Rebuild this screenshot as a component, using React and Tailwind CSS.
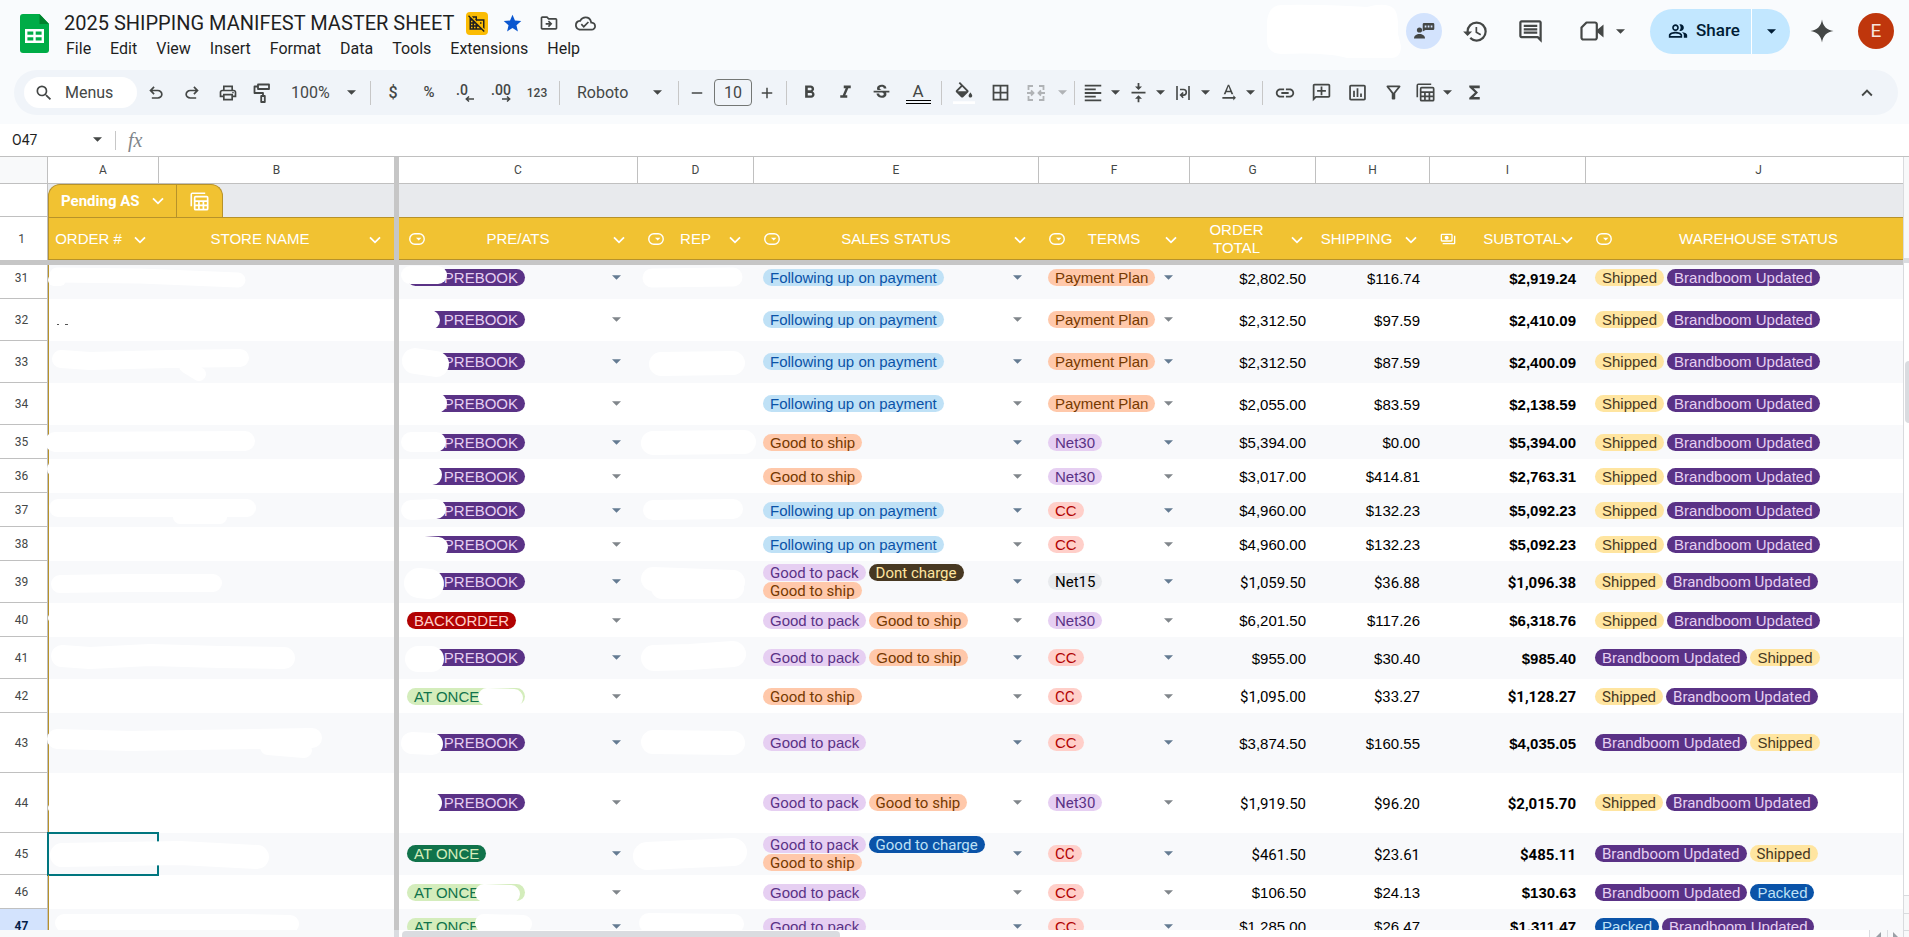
import React from "react";
import {
  MdDomainDisabled, MdStar, MdOutlineDriveFileMove, MdOutlineCloudDone, MdSearch, MdOutlinePrint,
  MdFormatBold, MdFormatItalic, MdStrikethroughS, MdBorderAll, MdFormatAlignLeft,
  MdVerticalAlignCenter, MdTextRotationNone, MdLink, MdOutlineAddComment, MdInsertChartOutlined,
  MdOutlineFilterAlt, MdFunctions, MdKeyboardArrowUp, MdHistory, MdOutlineComment,
  MdOutlinePeopleAlt, MdOutlinePayments, MdAdd, MdRemove,
} from "react-icons/md";

const GRID_FONT = "font-['Liberation_Sans',Arial,sans-serif]";
const UI_FONT = "font-[Roboto,'Liberation_Sans',sans-serif]";

const CHIPS = {
  PREBOOK: "bg-[#5a3286] text-[#e6cff2] min-w-[118px] text-right",
  BACKORDER: "bg-[#b10202] text-[#ffcfc9]",
  "AT ONCE": "bg-[#11734b] text-[#d4edbc]",
  "AT ONCE*": "bg-[#d4edbc] text-[#11734b] min-w-[118px]",
  "Following up on payment": "bg-[#bfe1f6] text-[#0a53a8]",
  "Good to ship": "bg-[#ffc8aa] text-[#753800]",
  "Good to pack": "bg-[#e6cff2] text-[#5a3286]",
  "Dont charge": "bg-[#473822] text-[#ffe5a0]",
  "Good to charge": "bg-[#0a53a8] text-[#bfe1f6]",
  "Payment Plan": "bg-[#ffc8aa] text-[#753800]",
  Net30: "bg-[#e6cff2] text-[#5a3286]",
  Net15: "bg-[#e8eaed] text-black",
  CC: "bg-[#ffcfc9] text-[#b10202]",
  Shipped: "bg-[#ffe5a0] text-[#473822]",
  "Brandboom Updated": "bg-[#5a3286] text-[#e6cff2]",
  Packed: "bg-[#0a53a8] text-[#bfe1f6]",
};

const FU = ["Following up on payment"];
const GP = ["Good to pack"];
const GS = ["Good to ship"];
const PS = ["Good to pack", "Good to ship"];
const SB = ["Shipped", "Brandboom Updated"];
const BS = ["Brandboom Updated", "Shipped"];
const H34 = { row: "h-[34px]", chip: "pb-0", num: "pt-0.5" };
const H42 = { row: "h-[42px]", chip: "pb-px", num: "pt-px" };
const H60 = { row: "h-[60px]", chip: "pb-px", num: "pt-px" };

const ROWS = [
  { n: 31, h: H42, pre: "PREBOOK", sales: FU, terms: "Payment Plan", total: "$2,802.50", ship: "$116.74", sub: "$2,919.24", wh: SB },
  { n: 32, h: H42, pre: "PREBOOK", sales: FU, terms: "Payment Plan", total: "$2,312.50", ship: "$97.59", sub: "$2,410.09", wh: SB },
  { n: 33, h: H42, pre: "PREBOOK", sales: FU, terms: "Payment Plan", total: "$2,312.50", ship: "$87.59", sub: "$2,400.09", wh: SB },
  { n: 34, h: H42, pre: "PREBOOK", sales: FU, terms: "Payment Plan", total: "$2,055.00", ship: "$83.59", sub: "$2,138.59", wh: SB },
  { n: 35, h: H34, pre: "PREBOOK", sales: GS, terms: "Net30", total: "$5,394.00", ship: "$0.00", sub: "$5,394.00", wh: SB },
  { n: 36, h: H34, pre: "PREBOOK", sales: GS, terms: "Net30", total: "$3,017.00", ship: "$414.81", sub: "$2,763.31", wh: SB },
  { n: 37, h: H34, pre: "PREBOOK", sales: FU, terms: "CC", total: "$4,960.00", ship: "$132.23", sub: "$5,092.23", wh: SB },
  { n: 38, h: H34, pre: "PREBOOK", sales: FU, terms: "CC", total: "$4,960.00", ship: "$132.23", sub: "$5,092.23", wh: SB },
  { n: 39, h: H42, roboto: true, pre: "PREBOOK", sales: ["Good to pack", "Dont charge", "Good to ship"], terms: "Net15", total: "$1,059.50", ship: "$36.88", sub: "$1,096.38", wh: SB },
  { n: 40, h: H34, pre: "BACKORDER", sales: PS, terms: "Net30", total: "$6,201.50", ship: "$117.26", sub: "$6,318.76", wh: SB },
  { n: 41, h: H42, pre: "PREBOOK", sales: PS, terms: "CC", total: "$955.00", ship: "$30.40", sub: "$985.40", wh: BS },
  { n: 42, h: H34, roboto: true, pre: "AT ONCE*", sales: GS, terms: "CC", total: "$1,095.00", ship: "$33.27", sub: "$1,128.27", wh: SB },
  { n: 43, h: H60, pre: "PREBOOK", sales: GP, terms: "CC", total: "$3,874.50", ship: "$160.55", sub: "$4,035.05", wh: BS },
  { n: 44, h: H60, roboto: true, pre: "PREBOOK", sales: PS, terms: "Net30", total: "$1,919.50", ship: "$96.20", sub: "$2,015.70", wh: SB },
  { n: 45, h: H42, roboto: true, selected: true, pre: "AT ONCE", sales: ["Good to pack", "Good to charge", "Good to ship"], terms: "CC", total: "$461.50", ship: "$23.61", sub: "$485.11", wh: BS },
  { n: 46, h: H34, pre: "AT ONCE*", sales: GP, terms: "CC", total: "$106.50", ship: "$24.13", sub: "$130.63", wh: ["Brandboom Updated", "Packed"] },
  { n: 47, h: H34, active: true, pre: "AT ONCE*", sales: GP, terms: "CC", total: "$1,285.00", ship: "$26.47", sub: "$1,311.47", wh: ["Packed", "Brandboom Updated"] },
];

/* Marker strokes that hide private cells: [pen width, path] */
const STROKES = [
  [15, "M57 275L140 276L238 280"], [12, "M54 280L60 280"], [18, "M61 359L90 361L170 359L240 358"], [14, "M186 366L199 374"],
  [20, "M55 442L245 441"], [16, "M55 469L60 469"], [18, "M58 508L247 508"], [14, "M180 517L220 517"],
  [18, "M60 584L130 583L213 583"], [8, "M52 618L56 618"], [22, "M62 656L90 658L150 655L220 657L284 658"],
  [20, "M57 739L130 741L312 738"], [16, "M268 747L304 750"], [8, "M52 808L56 808"], [24, "M62 855L180 853L257 857"],
  [18, "M64 923L240 923L290 924"],
  [18, "M410 275L438 275"], [20, "M410 320L430 320"], [26, "M415 361L436 364"], [20, "M410 404L437 403"],
  [20, "M411 442L436 442"], [20, "M410 476L432 475"], [20, "M411 510L436 509"], [20, "M410 545L438 547"],
  [30, "M419 583L429 584"], [26, "M418 659L431 659"], [22, "M412 743L432 744"], [22, "M412 803L431 803"],
  [18, "M487 697L514 698"], [18, "M484 893L511 894"], [18, "M484 923L523 924"],
  [19, "M652 278L733 277"], [24, "M661 364L733 363"], [24, "M653 443L744 442"], [20, "M653 510L733 509"],
  [24, "M653 579L733 582"], [22, "M662 588L733 588"], [26, "M654 658L690 657L733 654"], [24, "M653 742L733 743"],
  [28, "M647 856L733 852"], [20, "M649 923L734 924"],
];

function Sym({ d, className }) {
  return <svg viewBox="0 -960 960 960" fill="currentColor" aria-hidden="true" className={className}><path d={d} /></svg>;
}
const UNDO = "M280-200v-80h284q63 0 109.5-40T720-420q0-60-46.5-100T564-560H312l104 104-56 56-200-200 200-200 56 56-104 104h252q97 0 167 63t70 157q0 94-70 157t-167 63H280Z";
const REDO = "M396-200q-97 0-167-63t-70-157q0-94 70-157t167-63h252L544-744l56-56 200 200-200 200-56-56 104-104H396q-63 0-109.5 40T240-420q0 60 46.5 100T396-280h284v80H396Z";

const Caret = ({ className = "" }) => (
  <svg viewBox="0 0 10 5" className={`h-[5px] w-[9px] shrink-0 ${className}`} fill="currentColor" aria-hidden="true"><path d="M0 0h10L5 5z" /></svg>
);
const Chevron = () => (
  <svg viewBox="0 0 12 8" className="h-2 w-3" fill="none" stroke="currentColor" strokeWidth="1.8" aria-hidden="true"><path d="M1 1.3l5 5 5-5" /></svg>
);
const ChipIcon = () => (
  <svg viewBox="0 0 16 12" className="h-3 w-4" aria-hidden="true">
    <rect x="0.8" y="0.8" width="14.4" height="10.4" rx="5" fill="none" stroke="#fff" strokeWidth="1.4" />
    <path d="M7 4.8h5.400L9.700 7.600z" fill="#fff" />
  </svg>
);
const TableStack = ({ className }) => (
  <svg viewBox="0 0 20 20" className={className} fill="currentColor" aria-hidden="true">
    <path d="M0.500 15V2.500a2 2 0 0 1 2-2H16v1.700H2.200V15z" />
    <path fillRule="evenodd" d="M6 4h11.500a2 2 0 0 1 2 2v11.500a2 2 0 0 1-2 2H6a2 2 0 0 1-2-2V6a2 2 0 0 1 2-2zM5.800 5.800v3h11.900v-3zM5.800 10.600v2.600h2.700v-2.600zM10.300 10.600v2.600h2.900v-2.600zM15 10.600v2.600h2.700v-2.600zM5.800 15v2.700h2.700V15zM10.300 15v2.700h2.900V15zM15 15v2.700h2.700V15z" />
  </svg>
);

function Tool({ label, children, className = "w-9" }) {
  return (
    <button type="button" aria-label={label} className={`flex h-8 shrink-0 items-center justify-center ${className}`}>{children}</button>
  );
}
const Sep = () => <span className="mx-1 h-6 w-px shrink-0 bg-[#c7c7c7]" />;
function Pair({ label, children, className = "mr-px" }) {
  return (
    <div className={`flex shrink-0 items-center ${className}`}>
      <Tool label={label} className="w-7">{children}</Tool>
      <Tool label={`${label} options`} className="w-4"><Caret /></Tool>
    </div>
  );
}

function Logo() {
  return (
    <svg viewBox="0 0 29 39" className="h-[39px] w-[29px]" aria-label="Sheets" role="img">
      <path d="M3 0h16.500l9.500 10v26a3 3 0 0 1-3 3H3a3 3 0 0 1-3-3V3a3 3 0 0 1 3-3z" fill="#00ac47" />
      <path d="M19.500 0L29 10h-9.500z" fill="#00832d" />
      <path d="M5 15h19v14H5zM7.400 17.400v3.400h5.900v-3.400zM15.700 17.400v3.400h5.900v-3.400zM7.400 23.200v3.400h5.900v-3.400zM15.700 23.200v3.400h5.900v-3.400z" fill="#fff" fillRule="evenodd" />
    </svg>
  );
}

function Header() {
  return (
    <header className="flex h-[70px] shrink-0 justify-between pl-5 pr-[15px]">
      <div className="flex">
        <a href="#home" className="mt-3.5 block w-[29px]"><Logo /></a>
        <div className="ml-3.5 flex flex-col">
          <div className="mt-[11px] flex h-6 items-center text-[#444746]">
            <input aria-label="Document title" defaultValue="2025 SHIPPING MANIFEST MASTER SHEET" className="ml-px w-[402px] bg-transparent text-[20px] leading-6 text-[#1f1f1f] outline-none" />
            <span className="flex h-[23px] w-[22px] items-center justify-center rounded bg-[#fbbc04]"><MdDomainDisabled className="size-[18px] text-[#1f1f1f]" /></span>
            <button type="button" aria-label="Star" className="ml-3.5"><MdStar className="size-[21px] text-[#0b57d0]" /></button>
            <button type="button" aria-label="Move" className="ml-4"><MdOutlineDriveFileMove className="size-5" /></button>
            <button type="button" aria-label="Saved to Drive" className="ml-4"><MdOutlineCloudDone className="size-[21px]" /></button>
          </div>
          <nav className="flex gap-[19px] pl-[3px] pt-1 text-[16px] leading-5 text-[#1f1f1f]">
            {["File", "Edit", "View", "Insert", "Format", "Data", "Tools", "Extensions", "Help"].map((m) => (
              <button key={m} type="button">{m}</button>
            ))}
          </nav>
        </div>
      </div>
      <div className="flex h-[62px] items-center text-[#444746]">
        <svg viewBox="0 0 134 54" className="h-[54px] w-[134px]" fill="#fff" aria-hidden="true">
          <path d="M14 1Q50 0 100 3Q118 -2 126 4Q132 8 131 30L134 42Q134 54 124 54H80Q60 48 14 50Q0 49 0 36V18Q1 2 14 1Z" />
        </svg>
        <span className="ml-[5px] flex size-9 items-center justify-center rounded-full bg-[#d3e3fd]">
          <svg viewBox="0 0 24 24" className="size-6" fill="currentColor" aria-hidden="true">
            <circle cx="7.500" cy="11" r="2.600" /><path d="M2 19.500c0-3 2.500-4.500 5.500-4.500s5.500 1.500 5.500 4.500z" />
            <path d="M12 4h9a1.300 1.300 0 0 1 1.300 1.300v4.400A1.300 1.300 0 0 1 21 11h-7.500L10.700 12.500V5.300A1.300 1.300 0 0 1 12 4zm.7 2.500v2h1.700v-2zm3 0v2h1.700v-2zm3 0v2h1.700v-2z" fillRule="evenodd" />
          </svg>
        </span>
        <button type="button" aria-label="Version history" className="ml-5"><MdHistory className="size-[27px]" /></button>
        <button type="button" aria-label="Comments" className="ml-7"><MdOutlineComment className="size-[27px]" /></button>
        <button type="button" aria-label="Join a call" className="ml-9 flex items-center">
          <svg viewBox="0 0 24 20" className="h-5 w-6" aria-hidden="true">
            <path d="M6.500 1.500H15a1.800 1.800 0 0 1 1.800 1.800v13.400A1.800 1.800 0 0 1 15 18.500H3.300a1.800 1.800 0 0 1-1.800-1.800V6.500z" fill="none" stroke="currentColor" strokeWidth="2.200" strokeLinejoin="round" />
            <path d="M17 9l6.500-5.500v13L17 11z" fill="currentColor" />
          </svg>
          <Caret className="ml-3" />
        </button>
        <div className="ml-[25px] flex h-[45px] items-center rounded-full bg-[#c2e7ff] text-[#001d35]">
          <button type="button" className="flex h-full w-[102px] items-center gap-2 border-r border-white pl-[18px] text-[17px] font-medium"><MdOutlinePeopleAlt className="size-5 shrink-0" />Share</button>
          <button type="button" aria-label="Share options" className="flex h-full w-[38px] items-center justify-center"><Caret /></button>
        </div>
        <button type="button" aria-label="Ask Gemini" className="ml-5">
          <svg viewBox="0 0 24 24" className="size-6" fill="currentColor" aria-hidden="true"><path d="M12 0.500C12.800 7 17 11.200 23.500 12C17 12.800 12.800 17 12 23.500C11.200 17 7 12.800 0.500 12C7 11.200 11.200 7 12 0.500z" /></svg>
        </button>
        <button type="button" aria-label="Account" className="ml-6 flex size-9 items-center justify-center rounded-full bg-[#bf360c] text-[19px] text-[#f6e4dd]">E</button>
      </div>
    </header>
  );
}

function Toolbar() {
  return (
    <div role="toolbar" aria-label="Main toolbar" className="ml-3.5 mr-[11px] flex h-[45px] shrink-0 items-center rounded-full bg-[#f0f4f9] pl-2.5 text-[15px] text-[#444746]">
      <label className="mr-px flex h-[31px] w-[113px] shrink-0 items-center rounded-full bg-white pl-2.5">
        <MdSearch className="size-5 shrink-0" />
        <input aria-label="Menus" placeholder="Menus" className="ml-[11px] w-[60px] bg-transparent text-[16px] outline-none placeholder:text-[#444746]" />
      </label>
      <Tool label="Undo"><Sym d={UNDO} className="size-5" /></Tool>
      <Tool label="Redo"><Sym d={REDO} className="size-5" /></Tool>
      <Tool label="Print"><MdOutlinePrint className="size-5" /></Tool>
      <Tool label="Paint format" className="w-8">
        <svg viewBox="0 0 18 20" className="h-5 w-[18px]" fill="none" stroke="currentColor" strokeWidth="1.800" aria-hidden="true">
          <path d="M5 1.500h11v4.500H5zM5 3.500H1.500v6.500H10v3M8.200 13h3.600v6H8.200z" strokeLinejoin="round" />
        </svg>
      </Tool>
      <label className="relative flex w-[88px] shrink-0 items-center">
        <select aria-label="Zoom" className="w-full appearance-none bg-transparent pl-[13px] text-[16px] outline-none"><option>100%</option></select>
        <Caret className="pointer-events-none absolute right-2.5" />
      </label>
      <Sep />
      <Tool label="Currency"><span className="text-[16px] font-medium">$</span></Tool>
      <Tool label="Percent"><span className="text-[15px] font-medium">%</span></Tool>
      <Tool label="Decrease decimals">
        <span className="flex flex-col items-end leading-none"><span className="pr-1.5 text-[14px] font-medium leading-3">.0</span>
          <svg viewBox="0 0 9 6" className="h-1.5 w-[9px]" fill="none" stroke="currentColor" strokeWidth="1.500" aria-hidden="true"><path d="M9 3H1.500M4 .5L1.300 3 4 5.500" /></svg></span>
      </Tool>
      <Tool label="Increase decimals">
        <span className="flex flex-col items-end leading-none"><span className="text-[14px] font-medium leading-3">.00</span>
          <svg viewBox="0 0 9 6" className="h-1.5 w-[9px]" fill="none" stroke="currentColor" strokeWidth="1.500" aria-hidden="true"><path d="M0 3h7.500M5 .5L7.700 3 5 5.500" /></svg></span>
      </Tool>
      <Tool label="More formats"><span className="text-[12px] font-medium">123</span></Tool>
      <Sep />
      <label className="relative flex w-[110px] shrink-0 items-center">
        <select aria-label="Font" className="w-full appearance-none bg-transparent pl-[13px] text-[16px] outline-none"><option>Roboto</option></select>
        <Caret className="pointer-events-none absolute right-3" />
      </label>
      <Sep />
      <Tool label="Decrease font size" className="w-7"><MdRemove className="size-[18px]" /></Tool>
      <input aria-label="Font size" defaultValue="10" className="ml-[3px] h-[27px] w-[38px] shrink-0 rounded border border-[#747775] bg-transparent text-center text-[16px] outline-none" />
      <Tool label="Increase font size" className="w-[30px]"><MdAdd className="size-[18px]" /></Tool>
      <Sep />
      <Tool label="Bold"><MdFormatBold className="size-[21px]" /></Tool>
      <Tool label="Italic"><MdFormatItalic className="size-[21px]" /></Tool>
      <Tool label="Strikethrough"><MdStrikethroughS className="size-[21px]" /></Tool>
      <Tool label="Text color" className="w-[38px]">
        <span className="flex w-[25px] flex-col items-center pt-px"><span className="text-[17px] leading-4">A</span><span className="mt-px h-1 w-full border-y border-black" /></span>
      </Tool>
      <Sep />
      <Tool label="Fill color">
        <svg viewBox="0 0 24 24" className="size-[22px]" aria-hidden="true">
          <path fill="currentColor" d="M16.560 8.940L7.620 0 6.210 1.410l2.380 2.380-5.150 5.150c-.59.59-.59 1.540 0 2.120l5.500 5.500c.29.29.68.44 1.060.44s.77-.15 1.060-.44l5.500-5.500c.59-.58.59-1.530 0-2.120zM5.210 10L10 5.210 14.790 10H5.210zM19 11.500s-2 2.170-2 3.500c0 1.100.9 2 2 2s2-.9 2-2c0-1.330-2-3.500-2-3.500z" />
          <path fill="#fff" d="M0 21h24v3H0z" />
        </svg>
      </Tool>
      <Tool label="Borders"><MdBorderAll className="size-[21px]" /></Tool>
      <div className="flex shrink-0 text-[#b0b3b6]">
        <Tool label="Merge cells">
          <svg viewBox="0 0 18 16" className="h-4 w-[18px]" fill="none" stroke="currentColor" strokeWidth="1.800" aria-hidden="true">
            <path d="M6 1H1.500v4M12 1h4.500v4M6 15H1.500v-4M12 15h4.500v-4M0 8h6M4 5.500L6.500 8 4 10.500M18 8h-6M14 5.500L11.500 8l2.500 2.500" />
          </svg>
        </Tool>
        <Tool label="Merge options" className="w-4"><Caret /></Tool>
      </div>
      <Sep />
      <Pair label="Horizontal align"><MdFormatAlignLeft className="size-[22px]" /></Pair>
      <Pair label="Vertical align"><MdVerticalAlignCenter className="size-[21px]" /></Pair>
      <Pair label="Text wrapping">
        <svg viewBox="0 0 14 16" className="h-4 w-3.5" fill="none" stroke="currentColor" strokeWidth="1.600" aria-hidden="true">
          <path d="M1 1v14M13 1v14M4 4.500h3.500a2.800 2.800 0 0 1 0 5.600H5M7.200 7.500L4.600 10.100l2.600 2.600" />
        </svg>
      </Pair>
      <Pair label="Text rotation" className=""><MdTextRotationNone className="size-[21px]" /></Pair>
      <Sep />
      <Tool label="Insert link"><MdLink className="size-[22px]" /></Tool>
      <Tool label="Insert comment"><MdOutlineAddComment className="size-[21px] -scale-x-100" /></Tool>
      <Tool label="Insert chart"><MdInsertChartOutlined className="size-[21px]" /></Tool>
      <Tool label="Create a filter"><MdOutlineFilterAlt className="size-[21px]" /></Tool>
      <Pair label="Table views"><TableStack className="size-[19px]" /></Pair>
      <Tool label="Functions"><MdFunctions className="size-[21px]" /></Tool>
      <button type="button" aria-label="Hide menus" className="ml-auto mr-5"><MdKeyboardArrowUp className="size-[22px]" /></button>
    </div>
  );
}

const Cols = () => (
  <colgroup>
    <col className="w-12" /><col className="w-[111px]" /><col className="w-[235px]" /><col className="w-[5px]" />
    <col className="w-[239px]" /><col className="w-[116px]" /><col className="w-[285px]" /><col className="w-[151px]" />
    <col className="w-[126px]" /><col className="w-[114px]" /><col className="w-[156px]" /><col />
  </colgroup>
);

function Head({ children, icon, arrow = true, end = false, first = false }) {
  return (
    <th scope="col" className={`border-y border-[#b7922a] bg-[#f1c232] p-0 font-normal text-white ${first ? "border-l" : ""}`}>
      <div className={`flex items-center ${end ? "relative" : ""}`}>
        {icon && <span className={end ? "absolute left-2.5" : "w-7 pl-2.5"}>{icon}</span>}
        <span className={`flex-1 text-[15px] leading-[18px] ${end ? "text-right" : "text-center"} ${icon && !end && arrow ? "pl-1" : ""}`}>{children}</span>
        {arrow && (
          <button type="button" aria-label="Column menu" className={`flex pt-0.5 ${end ? "w-[25px]" : first ? "w-[31px] pl-1.5" : "w-[33px] pl-2"}`}><Chevron /></button>
        )}
      </div>
    </th>
  );
}

function Chips({ items, odd, pad = "pl-[9px]", arrow = true }) {
  return (
    <div className={`flex items-center ${pad}`}>
      <div className="flex flex-1 flex-wrap gap-x-[3px] gap-y-px">
        {items.map((c) => (
          <span key={c} className={`h-[17px] whitespace-nowrap rounded-full px-[7px] text-[15px] leading-[18px] ${CHIPS[c]}`}>{c.replace("*", "")}</span>
        ))}
      </div>
      {arrow && (
        <button type="button" aria-label="Choose value" className={`w-[26px] ${odd ? "text-[#647b92]" : "text-[#80868b]"}`}><Caret /></button>
      )}
    </div>
  );
}

function Sheet() {
  const dropdown = <ChipIcon />;
  return (
    <div className="flex min-h-0 flex-1 flex-col overflow-hidden bg-white">
      <table className={`w-full shrink-0 table-fixed border-separate border-spacing-0 ${GRID_FONT}`}>
        <Cols />
        <thead>
          <tr className={`h-[27px] text-[12px] text-[#444746] ${UI_FONT}`}>
            <td className="border-b border-r border-[#c0c0c0] bg-[#f8f9fa] p-0" />
            {["A", "B", "", "C", "D", "E", "F", "G", "H", "I", "J"].map((c, i) =>
              c ? (
                <th key={i} scope="col" className={`border-b border-[#c0c0c0] p-0 font-normal ${c === "B" ? "" : c === "J" ? "pl-7" : "border-r"}`}>{c}</th>
              ) : (
                <td key={i} className="bg-[#c6c6c6] p-0" />
              ),
            )}
          </tr>
          <tr className="h-[33px]">
            <td className="border-b border-r border-[#c0c0c0] p-0" />
            <td colSpan={2} className="bg-[#e8eaed] p-0">
              <div className={`flex h-[33px] w-[175px] rounded-t-[12px] border border-b-0 border-[#b7922a] bg-[#f1c232] text-white ${UI_FONT}`}>
                <button type="button" className="flex w-[128px] items-center justify-between border-r border-[#b7922a] pl-3 pr-3 text-[15px] font-bold">Pending AS<Chevron /></button>
                <button type="button" aria-label="Table views" className="flex flex-1 items-center justify-center"><TableStack className="size-[19px]" /></button>
              </div>
            </td>
            <td className="bg-[#c6c6c6] p-0" />
            <td colSpan={8} className="bg-[#e8eaed] p-0" />
          </tr>
          <tr className="h-[43px]">
            <th scope="row" className={`border-r border-[#c0c0c0] p-0 pr-1 text-[12px] font-normal text-[#444746] ${UI_FONT}`}>1</th>
            <Head first>ORDER #</Head>
            <Head>STORE NAME</Head>
            <td className="bg-[#c6c6c6] p-0" />
            <Head icon={dropdown}>PRE/ATS</Head>
            <Head icon={dropdown}>REP</Head>
            <Head icon={dropdown}>SALES STATUS</Head>
            <Head icon={dropdown}>TERMS</Head>
            <Head>ORDER<br />TOTAL</Head>
            <Head>SHIPPING</Head>
            <Head icon={<MdOutlinePayments className="size-4" />} end>SUBTOTAL</Head>
            <Head icon={dropdown} arrow={false}>WAREHOUSE STATUS</Head>
          </tr>
        </thead>
      </table>
      <div className="h-[5px] shrink-0 bg-[#c6c6c6]" />
      <div className="relative min-h-0 flex-1 overflow-hidden">
        <table className={`-mt-2 w-full table-fixed border-separate border-spacing-0 text-[15px] leading-[18px] text-black ${GRID_FONT}`}>
          <Cols />
          <tbody>
            {ROWS.map((r) => {
              const odd = r.n % 2 === 1;
              const font = r.roboto ? UI_FONT : "";
              const chip = `px-0 pt-0 ${r.h.chip} ${font}`;
              const num = `pb-0 pl-0 pr-2.5 text-right ${r.h.num} ${font}`;
              return (
                <tr key={r.n} className={`${r.h.row} ${odd ? "bg-[#f8f9fb]" : "bg-white"}`}>
                  <th scope="row" className={`border-b border-r border-[#c0c0c0] p-0 pr-1 text-[12px] ${UI_FONT} ${r.active ? "bg-[#d3e3fd] font-bold text-[#041e49]" : "bg-white font-normal text-[#444746]"}`}>{r.n}</th>
                  <td className="relative border-l border-[#b7922a] p-0">
                    {r.selected && <span className="absolute -inset-y-px -left-0.5 right-0 border-2 border-[#00767f]" />}
                  </td>
                  <td className="p-0" />
                  <td className="bg-[#c6c6c6] p-0" />
                  <td className={`px-0 pt-0 ${r.h.chip}`}><Chips items={[r.pre]} odd={odd} pad="pl-2" /></td>
                  <td className="p-0" />
                  <td className={chip}><Chips items={r.sales} odd={odd} /></td>
                  <td className={chip}><Chips items={[r.terms]} odd={odd} /></td>
                  <td className={num}>{r.total}</td>
                  <td className={num}>{r.ship}</td>
                  <td className={`font-bold ${num}`}>{r.sub}</td>
                  <td className={chip}><Chips items={r.wh} odd={odd} arrow={false} /></td>
                </tr>
              );
            })}
          </tbody>
        </table>
        <svg className="pointer-events-none absolute left-0 top-0 h-[672px] w-[760px]" viewBox="0 265 760 672" fill="none" stroke="#fff" strokeLinecap="round" strokeLinejoin="round" aria-hidden="true">
          {STROKES.map(([w, d]) => <path key={d} d={d} strokeWidth={w} />)}
          <path d="M57 324.500h2M65 324.500h3" stroke="#555" strokeWidth="1" strokeLinecap="butt" />
        </svg>
      </div>
      <div className="flex h-[7px] shrink-0 bg-white">
        <div className="w-[394px] bg-[#f8f9fa]" />
        <div className="w-[5px] bg-[#dadce0]" />
        <div className="ml-[3px] mt-px w-[438px] rounded-t bg-[#dadce0]" />
        <div className="ml-auto flex text-[#9aa0a6]">
          <span className="flex w-[18px] items-end justify-center border-l border-[#dadce0] bg-[#f8f9fa]"><svg viewBox="0 0 5 5" className="h-[5px] w-[5px]" fill="currentColor" aria-hidden="true"><path d="M5 0v5H0z" /></svg></span>
          <span className="flex w-4 items-end justify-center border-l border-[#dadce0] bg-[#f8f9fa]"><svg viewBox="0 0 5 5" className="h-[5px] w-[5px]" fill="currentColor" aria-hidden="true"><path d="M0 0v5h5z" /></svg></span>
        </div>
      </div>
    </div>
  );
}

export default function App() {
  return (
    <div className={`flex h-screen flex-col overflow-hidden bg-[#f9fbfd] ${UI_FONT}`}>
      <Header />
      <Toolbar />
      <div className="mt-[9px] flex h-[33px] shrink-0 items-center border-b border-[#c0c0c0] bg-white">
        <input aria-label="Name box" defaultValue="O47" className="w-[93px] bg-transparent pl-3 text-[14px] text-[#1f1f1f] outline-none" />
        <Caret className="-mt-px text-[#444746]" />
        <span className="ml-[13px] h-[19px] w-px bg-[#c7c7c7]" />
        <label htmlFor="formula" className="ml-3 w-6 font-['Liberation_Serif',serif] text-[20px] italic leading-5 text-[#80868b]">fx</label>
        <input id="formula" className="flex-1 bg-transparent outline-none" />
      </div>
      <div className="flex min-h-0 flex-1">
        <Sheet />
        <div className="flex w-1.5 shrink-0 flex-col border-l border-[#d9dbde] bg-white">
          <div className="h-[101px] bg-[#f8f9fa]" />
          <div className="h-[5px] bg-[#dadce0]" />
          <div className="ml-px mt-[98px] h-[62px] rounded-l bg-[#dadce0]" />
          <div className="mt-auto h-[18px] border-t border-[#d9dbde] bg-[#f8f9fa]" />
          <div className="h-[17px] border-t border-[#d9dbde] bg-[#f8f9fa]" />
          <div className="h-[7px] border-t border-[#d9dbde] bg-[#f8f9fa]" />
        </div>
      </div>
    </div>
  );
}
